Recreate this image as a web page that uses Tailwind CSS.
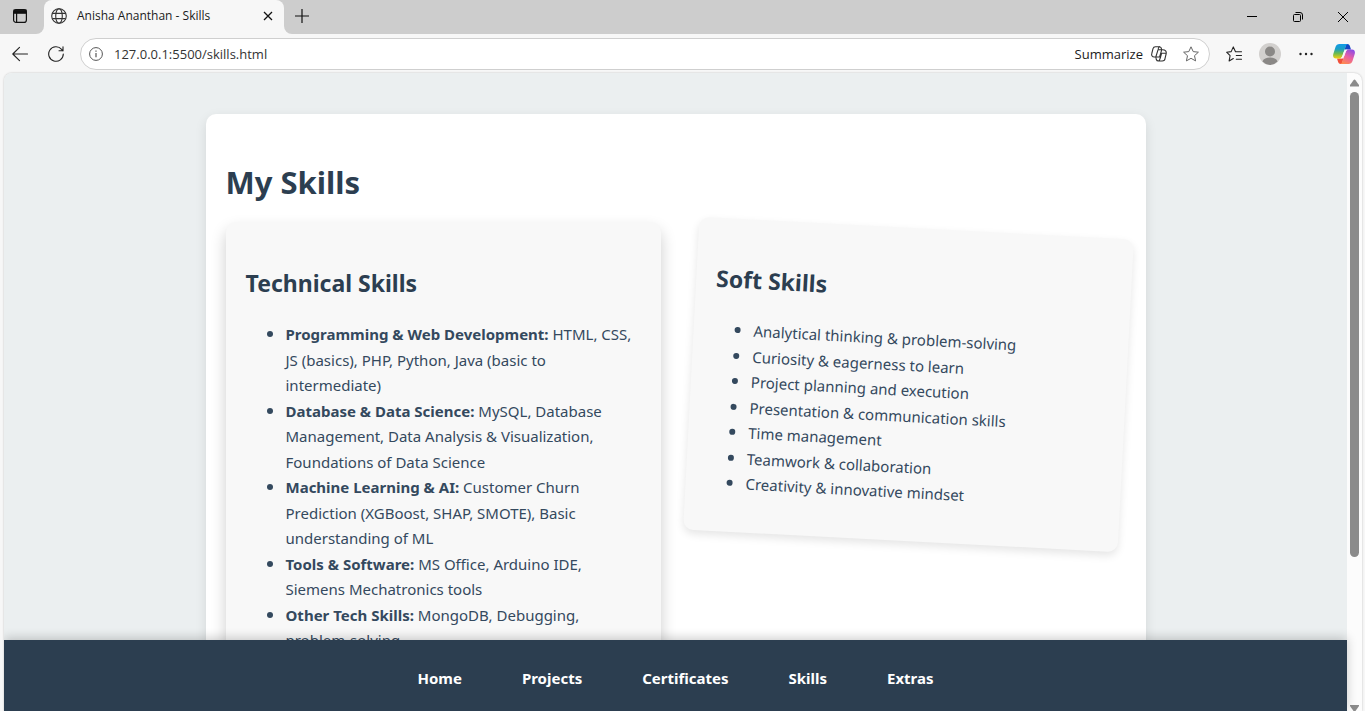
<!DOCTYPE html>
<html lang="en">
<head>
<meta charset="utf-8">
<title>Anisha Ananthan - Skills</title>
<script src="https://cdn.jsdelivr.net/npm/@tailwindcss/browser@4"></script>
</head>
<body class="h-screen flex flex-col overflow-hidden bg-[#f7f7f7] font-['Open_Sans','Noto_Sans',sans-serif] text-[#1b1b1b]">

<!-- Tab strip -->
<header class="flex h-[34px] shrink-0 bg-[#cdcdcd]">
  <div class="w-11 bg-[#f7f7f7]">
    <button aria-label="Tab actions" class="flex h-full w-full items-center justify-center rounded-br-lg bg-[#cdcdcd] pr-1 pb-[2px]">
      <svg class="size-4" viewBox="0 0 16 16" fill="none" stroke="#111" stroke-width="1.2"><rect x="1.6" y="1.6" width="12.8" height="12.8" rx="2.5"/><path d="M2 2.2h12v3H2z" fill="#111"/><path d="M4.6 5v9"/></svg>
    </button>
  </div>
  <div class="flex w-60 items-center rounded-t-lg bg-[#f7f7f7] pr-2 pb-[2px] pl-[7px]">
    <svg class="size-4 shrink-0" viewBox="0 0 16 16" fill="none" stroke="#333" stroke-width="1.1"><circle cx="8" cy="8" r="7.3"/><ellipse cx="8" cy="8" rx="3.3" ry="7.3"/><path d="M1.4 5.4h13.2M1.4 10.6h13.2"/></svg>
    <span class="ml-[10px] flex-1 text-[12px] leading-4 whitespace-nowrap">Anisha Ananthan - Skills</span>
    <button aria-label="Close tab" class="flex size-4 items-center justify-center"><svg class="size-[10px]" viewBox="0 0 10 10" stroke="#111" stroke-width="1.3"><path d="M1 1l8 8M9 1l-8 8"/></svg></button>
  </div>
  <div class="flex-1 bg-[#f7f7f7]">
    <div class="flex h-full items-center rounded-bl-lg bg-[#cdcdcd] pl-[11px]">
      <button aria-label="New tab" class="mr-auto pb-[2px]"><svg class="size-[14px]" viewBox="0 0 14 14" stroke="#111" stroke-width="1.2"><path d="M7 0v14M0 7h14"/></svg></button>
      <div class="flex">
        <button aria-label="Minimize" class="flex h-[34px] w-[46px] items-center justify-center"><svg class="size-[10px]" viewBox="0 0 10 10" stroke="#000"><path d="M0 4.5h10"/></svg></button>
        <button aria-label="Restore" class="flex h-[34px] w-[46px] items-center justify-center"><svg class="size-[10px]" viewBox="0 0 10 10" fill="none" stroke="#000"><rect x=".5" y="2.5" width="7" height="7" rx="1"/><path d="M2.5.5h4.5a2.5 2.5 0 0 1 2.5 2.5v4.5"/></svg></button>
        <button aria-label="Close" class="flex h-[34px] w-[44px] items-center justify-center"><svg class="size-[10px]" viewBox="0 0 10 10" stroke="#000"><path d="M0 0l10 10M10 0L0 10"/></svg></button>
      </div>
    </div>
  </div>
</header>

<!-- Toolbar -->
<div class="flex h-[39px] shrink-0 items-center pr-[10px] pl-3">
  <button aria-label="Back"><svg class="size-4" viewBox="0 0 16 16" fill="none" stroke="#222" stroke-width="1.1" stroke-linecap="round" stroke-linejoin="round"><path d="M15.5 8H.8M7.5 1.3L.8 8l6.7 6.7"/></svg></button>
  <button aria-label="Refresh" class="ml-5"><svg class="size-4" viewBox="0 0 16 16" fill="none" stroke="#222" stroke-width="1.1" stroke-linecap="round" stroke-linejoin="round"><path d="M15.3 8A7.3 7.3 0 1 1 13.6 3.3L15 4.8M15 .8v4h-4"/></svg></button>
  <form class="ml-4 flex h-8 flex-1 items-center rounded-full border border-[#cfcfcf] bg-white px-2">
    <svg class="size-[14px] shrink-0" viewBox="0 0 14 14" fill="none" stroke="#555"><circle cx="7" cy="7" r="6.4"/><path d="M7 6v4.2M7 3.6v1.2" stroke-width="1.2"/></svg>
    <input aria-label="Address" value="127.0.0.1:5500/skills.html" class="ml-[11px] min-w-0 flex-1 bg-transparent text-[13px] leading-5 text-[#333] outline-none">
    <button type="button" class="flex items-center text-[13px] leading-5">Summarize
      <svg class="ml-2 size-4" viewBox="0 0 16 16" fill="none" stroke="#333" stroke-width="1.1" stroke-linejoin="round"><path d="M10.7 3.8 10.2 2A2 2 0 0 0 8.3.7H4.4A2.600 2.600 0 0 0 2 2.6L.8 7.5c-.6 2 .5 3.500 2.400 3.500h1.600L7 3.800h4.600c2.700 0 4.200 1.600 3.500 4.200l-1 4.200a3 3 0 0 1-3 2.800H7.400a2.200 2.200 0 0 1-2.100-1.500L4.800 11M8.600.8C7.700 1 7.300 2 7 3.800M4.800 11h3.800l2.100-7.200M7.400 15c1.400-.3 1.600-2 2.200-4.200l1-3.500h4.200"/></svg>
    </button>
    <button type="button" aria-label="Add to favorites" class="mr-[2px] ml-4"><svg class="size-4" viewBox="0 0 16 16" fill="none" stroke="#666" stroke-linejoin="round"><path d="M8 .8l2.200 4.800 5.200.6-3.900 3.500 1.100 5.200L8 12.300l-4.600 2.600 1.100-5.200L.6 6.200l5.200-.6z"/></svg></button>
  </form>
  <button aria-label="Favorites" class="ml-4"><svg class="size-4" viewBox="0 0 16 16" fill="none" stroke="#222" stroke-width="1.1" stroke-linejoin="round" stroke-linecap="round"><path d="M9.500 5.700 7.300.9 5.200 5.600.6 6.200l3.500 3.500-1 5.300 4.200-2.500M9.500 5.700h6M10.300 9.500h5.200M10.300 13.300h5.200"/></svg></button>
  <button aria-label="Profile" class="ml-[17px]"><svg class="size-[22px]" viewBox="0 0 22 22"><circle cx="11" cy="11" r="11" fill="#d2d0ce"/><circle cx="11" cy="8.500" r="5" fill="#8a8886"/><path d="M3.500 18.500c1-3 4-4 7.500-4s6.500 1 7.500 4A11 11 0 0 1 11 22a11 11 0 0 1-7.500-3.500z" fill="#8a8886"/></svg></button>
  <button aria-label="Settings and more" class="ml-[18px]"><svg class="size-[14px]" viewBox="0 0 14 14" fill="#222"><circle cx="1.500" cy="7" r="1.200"/><circle cx="7" cy="7" r="1.200"/><circle cx="12.500" cy="7" r="1.200"/></svg></button>
  <button aria-label="Copilot" class="ml-5"><svg class="size-[22px]" viewBox="0 0 22 22"><defs>
    <linearGradient id="a" x1="0" y1="0" x2="0" y2="1"><stop offset="0" stop-color="#129be8"/><stop offset=".35" stop-color="#1b9fc4"/><stop offset=".65" stop-color="#6cba50"/><stop offset="1" stop-color="#f8cf10"/></linearGradient>
    <linearGradient id="b" x1=".8" y1="0" x2=".3" y2="1"><stop offset="0" stop-color="#8a4be8"/><stop offset=".5" stop-color="#e85fa4"/><stop offset="1" stop-color="#ff8a50"/></linearGradient></defs>
    <path d="M13 1h1.500a2.500 2.500 0 0 1 2.300 1.700L18 6.500h-3.500c-2 0-2.800.8-3.300 2z" fill="#1447c4"/>
    <path d="M9 21H7.500a2.500 2.500 0 0 1-2.300-1.700L4 15.500h3.500c2 0 2.800-.8 3.300-2z" fill="#f0503a"/>
    <path d="M6.500 1H15c-1.500.3-2 1.500-2.500 3L9.300 13c-.6 1.600-1.500 2.500-3 2.500H3C.6 15.500-.4 13.500.3 11L2.500 4C3.100 2 4.500 1 6.500 1z" fill="url(#a)"/>
    <path d="M15.500 21H7c1.500-.3 2-1.500 2.500-3l3.200-9c.6-1.600 1.500-2.500 3-2.500H19c2.400 0 3.400 2 2.700 4.500L19.500 18c-.6 2-2 3-4 3z" fill="url(#b)"/>
    <path d="M12.300 6.500h2.200c-1 .4-1.500 1.200-1.900 2.500l-1.800 5c-.3.900-.7 1.500-1.600 1.500H7.300c1-.3 1.600-1.100 2-2.300l1.800-5.200c.3-.9.600-1.500 1.200-1.500z" fill="#f7f7f7"/></svg></button>
</div>

<!-- Page viewport -->
<div class="mr-[3px] ml-1 flex min-h-0 flex-1 overflow-hidden rounded-t-lg bg-[#fcfcfc] font-['Noto_Sans',sans-serif] shadow-[0_0_2px_rgba(0,0,0,0.25)]">
  <div class="flex min-w-0 flex-1 flex-col bg-[#ebeff0]">
    <main class="min-h-0 flex-1 overflow-hidden px-5 pt-[41px] text-[#34495e]">
      <section class="mx-auto max-w-[940px] rounded-[10px] bg-white p-5 pb-20 shadow-[0_4px_12px_rgba(0,0,0,0.1)]">
        <h1 class="mt-[23px] mb-5 text-[31px] leading-[51px] font-bold text-[#2c3e50]">My Skills</h1>
        <div class="grid grid-cols-2 items-start gap-[30px]">
          <article class="-translate-y-[6px] rounded-[10px] bg-[#f8f8f8] p-5 shadow-[0_8px_16px_rgba(0,0,0,0.2)]">
            <h2 class="mt-[22px] mb-5 text-[23px] leading-[38px] font-bold text-[#2c3e50]">Technical Skills</h2>
            <ul class="mb-4 list-disc pl-10 text-[15px] leading-[1.7] marker:text-lg marker:leading-none">
              <li><strong>Programming &amp; Web Development:</strong> HTML, CSS,<br>JS (basics), PHP, Python, Java (basic to<br>intermediate)</li>
              <li><strong>Database &amp; Data Science:</strong> MySQL, Database<br>Management, Data Analysis &amp; Visualization,<br>Foundations of Data Science</li>
              <li><strong>Machine Learning &amp; AI:</strong> Customer Churn<br>Prediction (XGBoost, SHAP, SMOTE), Basic<br>understanding of ML</li>
              <li><strong>Tools &amp; Software:</strong> MS Office, Arduino IDE,<br>Siemens Mechatronics tools</li>
              <li><strong>Other Tech Skills:</strong> MongoDB, Debugging,<br>problem-solving</li>
            </ul>
          </article>
          <article class="rotate-3 rounded-[10px] bg-[#f8f8f8] p-5 shadow-[0_4px_8px_rgba(0,0,0,0.1)]">
            <h2 class="mt-[21px] mb-5 text-[23px] leading-[38px] font-bold text-[#2c3e50]">Soft Skills</h2>
            <ul class="mb-[15px] list-disc pl-10 text-[15px] leading-[1.7] marker:text-lg marker:leading-none">
              <li>Analytical thinking &amp; problem-solving</li>
              <li>Curiosity &amp; eagerness to learn</li>
              <li>Project planning and execution</li>
              <li>Presentation &amp; communication skills</li>
              <li>Time management</li>
              <li>Teamwork &amp; collaboration</li>
              <li>Creativity &amp; innovative mindset</li>
            </ul>
          </article>
        </div>
      </section>
    </main>
    <nav class="relative flex h-[71px] shrink-0 items-center justify-center gap-[60px] bg-[#2c3e50] pt-1 text-[15px] leading-6 font-bold text-white shadow-[0_-2px_10px_rgba(0,0,0,0.2)]">
      <a href="#home">Home</a>
      <a href="#projects">Projects</a>
      <a href="#certificates">Certificates</a>
      <a href="#skills">Skills</a>
      <a href="#extras">Extras</a>
    </nav>
  </div>
  <!-- Scrollbar -->
  <div class="flex w-[15px] flex-col items-center pt-[6px]">
    <svg class="h-2 w-[9px] shrink-0" viewBox="0 0 9 8" fill="#8b8b8b"><path d="M3.500 1.200q1-1.200 2 0L9 6v1.500H0V6z"/></svg>
    <div class="mt-[5px] h-[465px] w-[9px] rounded-full bg-[#8b8b8b]"></div>
    <svg class="mt-auto h-[6px] w-[9px] shrink-0" viewBox="0 0 9 6" fill="#8b8b8b"><path d="M0 0h9v1L5.500 6h-2L0 1z"/></svg>
  </div>
</div>
</body>
</html>
